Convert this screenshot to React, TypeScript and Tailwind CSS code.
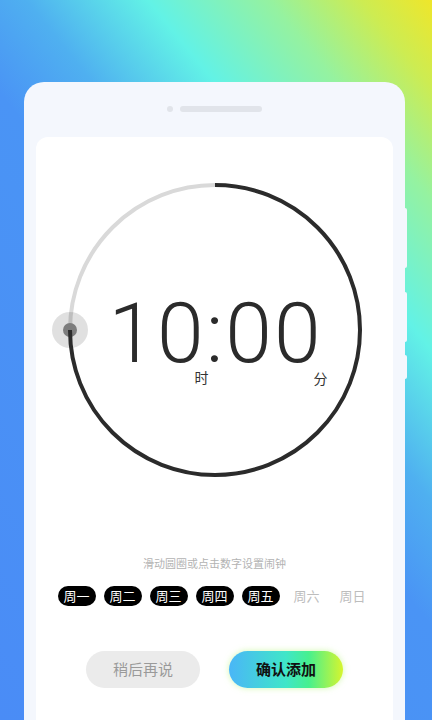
const DAYS = [
  { label: "周一", on: true },
  { label: "周二", on: true },
  { label: "周三", on: true },
  { label: "周四", on: true },
  { label: "周五", on: true },
  { label: "周六", on: false },
  { label: "周日", on: false },
];

const CJK = "font-['Noto_Sans_CJK_SC','Noto_Sans',sans-serif]";

function Dial() {
  return (
    <div className="relative mx-auto mt-[43px] h-[300px] w-[300px]">
      <svg width="300" height="300" viewBox="0 0 300 300" className="absolute inset-0 overflow-visible">
        <path d="M5 150 A145 145 0 0 1 150 5" fill="none" stroke="#d9d9d9" strokeWidth="4" />
        <circle cx="5" cy="150" r="18" fill="rgba(0,0,0,0.12)" />
        <circle cx="5" cy="150" r="7" fill="#7d7d7d" />
        <path d="M150 5 A145 145 0 1 1 5 150" fill="none" stroke="#2b2b2b" strokeWidth="4" />
      </svg>
      <div className="absolute left-[2px] right-0 top-[121px] text-center font-['Roboto',sans-serif] text-[84px] font-light leading-[66px] tracking-[2px] text-[#2b2b2b]">
        10:00
      </div>
      <span className={`absolute left-[130px] top-[190px] text-[14px] leading-none text-[#333] ${CJK}`}>时</span>
      <span className={`absolute left-[249px] top-[191px] text-[14px] leading-none text-[#333] ${CJK}`}>分</span>
    </div>
  );
}

export default function App() {
  return (
    <div className="relative flex h-[720px] w-[432px] flex-col overflow-hidden bg-[linear-gradient(51deg,#4a8cf6_0%,#4a94f5_50%,#4fb0f0_60%,#62f2e6_72%,#95f2a0_84%,#cdec52_93%,#efe62a_100%)] pt-[82px]">
      <div className="relative ml-[24px] flex w-[381px] flex-1 flex-col rounded-t-[20px] bg-[#f4f7fd] px-[12px] pt-[24px]">
        <div className="flex items-center justify-center gap-[7px]">
          <div className="h-[6px] w-[6px] rounded-full bg-[#e1e4ea]" />
          <div className="h-[6px] w-[82px] rounded-full bg-[#e1e4ea]" />
        </div>
        <div className="mt-[25px] flex flex-1 flex-col rounded-t-[12px] bg-white">
          <Dial />
          <p className={`mt-[75px] text-center text-[11px] leading-4 text-[#b3b3b3] ${CJK}`}>
            滑动圆圈或点击数字设置闹钟
          </p>
          <div className={`mt-[15px] flex justify-center gap-[8px] ${CJK}`}>
            {DAYS.map((d) =>
              d.on ? (
                <span
                  key={d.label}
                  className="flex h-[20px] w-[38px] items-center justify-center rounded-full bg-black text-[13px] text-white"
                >
                  {d.label}
                </span>
              ) : (
                <span
                  key={d.label}
                  className="flex h-[20px] w-[38px] items-center justify-center text-[13px] text-[#bdbdbd]"
                >
                  {d.label}
                </span>
              )
            )}
          </div>
          <div className={`mt-[45px] flex justify-center gap-[29px] ${CJK}`}>
            <button
              type="button"
              className="h-[37px] w-[114px] rounded-full bg-[#ebebeb] text-[15px] text-[#9a9a9a]"
            >
              稍后再说
            </button>
            <button
              type="button"
              className="h-[37px] w-[114px] rounded-full bg-[linear-gradient(90deg,#4ab6f7_0%,#3fe6c8_50%,#47f08e_70%,#d6f52e_100%)] text-[15px] font-bold text-[#111] shadow-[0_0_6px_rgba(180,245,120,0.6)]"
            >
              确认添加
            </button>
          </div>
        </div>
        <div className="absolute right-[-2px] top-[126px] h-[60px] w-[2px] rounded-r bg-[#f4f7fd]" />
        <div className="absolute right-[-2px] top-[210px] h-[50px] w-[2px] rounded-r bg-[#f4f7fd]" />
        <div className="absolute right-[-2px] top-[273px] h-[24px] w-[2px] rounded-r bg-[#f4f7fd]" />
      </div>
    </div>
  );
}
